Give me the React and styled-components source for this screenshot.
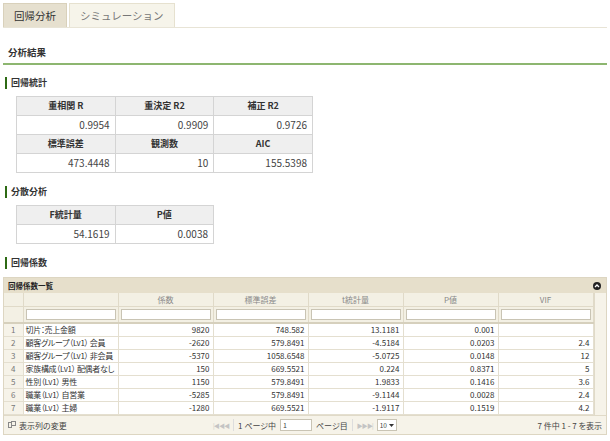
import React from "react";
import styled, { createGlobalStyle } from "styled-components";

const GlobalStyle = createGlobalStyle`
  html, body {
    margin: 0;
    padding: 0;
    background: #fff;
    font-family: "Noto Sans CJK JP", "DejaVu Sans", sans-serif;
    color: #333;
  }
`;

const Page = styled.div`
  padding: 3px 3px 0 3px;
`;

const TabBar = styled.div`
  display: flex;
  gap: 2px;
  height: 24px;
  border-bottom: 1px solid #e8e4d6;
`;

const Tab = styled.div`
  height: 24px;
  box-sizing: border-box;
  padding: 0 10px;
  display: flex;
  align-items: center;
  font-size: 10.5px;
  color: ${(p) => (p.$active ? "#333" : "#777")};
  background: ${(p) => (p.$active ? "#e6e0cf" : "#f6f4ea")};
  border: 1px solid ${(p) => (p.$active ? "#d9d1bb" : "#e6e1cf")};
  border-bottom: none;
`;

const MainTitle = styled.div`
  margin-top: 18px;
  padding: 0 0 4px 5px;
  font-size: 9.5px;
  font-weight: bold;
  line-height: 13px;
  border-bottom: 2px solid #8db670;
`;

const SubTitle = styled.div`
  margin: ${(p) => p.$top}px 0 0 2px;
  padding-left: 4px;
  border-left: 2px solid #2d6a14;
  font-size: 9px;
  font-weight: bold;
  line-height: 12px;
`;

const StatTable = styled.table`
  margin: 7px 0 0 13px;
  border-collapse: collapse;
  width: ${(p) => p.$width}px;
  table-layout: fixed;
  th,
  td {
    border: 1px solid #d4d4d4;
    height: 18px;
    padding: 0 5px;
    line-height: 14px;
  }
  th {
    background: #efefef;
    font-weight: bold;
    font-size: 9px;
    text-align: center;
  }
  td {
    background: #fff;
    text-align: right;
    font-size: 10px;
    color: #444;
  }
`;

const Grid = styled.div`
  margin-top: 8px;
  border: 1px solid #ddd6c2;
  background: #f6f3e9;
  font-size: 8px;
  font-feature-settings: "palt";
`;

const Caption = styled.div`
  display: flex;
  align-items: center;
  justify-content: space-between;
  height: 15px;
  padding: 0 4px;
  background: #e6dfcb;
  font-weight: bold;
  font-size: 7.5px;
  color: #222;
`;

const CloseBtn = styled.span`
  width: 8px;
  height: 8px;
  border-radius: 50%;
  background: #222;
  display: flex;
  align-items: center;
  justify-content: center;
  margin-right: 1px;
`;

const Table = styled.table`
  border-collapse: collapse;
  table-layout: fixed;
  width: 589px;
  background: #f6f3e9;
`;

const HeadCell = styled.th`
  font-weight: normal;
  color: #888;
  height: 13px;
  padding: 0 2px;
  border-right: 1px solid #e0dac8;
  border-bottom: 1px solid #e0dac8;
  background: #f3f0e4;
  text-align: center;
`;

const FilterCell = styled.td`
  height: 13px;
  padding: 1px 2px 1px 2px;
  border-right: 1px solid #e0dac8;
  border-bottom: 2px solid #d6d0bd;
  background: #f3f0e4;
`;

const FilterInput = styled.div`
  height: 9px;
  background: #fff;
  border: 1px solid #c9c4b4;
`;

const Cell = styled.td`
  height: 12px;
  padding: 0 3px 0 ${(p) => (p.$align === "left" ? 2 : 3)}px;
  line-height: 12px;
  border-right: 1px solid #e4dfd0;
  border-bottom: 1px solid #e4dfd0;
  background: ${(p) => (p.$num ? "#f6f3e9" : "#fff")};
  text-align: ${(p) => p.$align || "left"};
  color: ${(p) => (p.$num ? "#777" : "#333")};
  letter-spacing: ${(p) => (p.$align === "left" ? "-0.3px" : "0")};
  white-space: nowrap;
  overflow: hidden;
`;

const Body = styled.div`
  display: flex;
`;

const Spare = styled.div`
  flex: 1;
  background: #f6f3e9;
  border-left: 1px solid #e0dac8;
`;

const Pager = styled.div`
  display: grid;
  grid-template-columns: 1fr auto 1fr;
  align-items: center;
  height: 16px;
  padding: 1px 4px;
  border-top: 1px solid #e0dac8;
  background: #f6f3e9;
  color: #444;
`;

const PagerLeft = styled.div`
  display: flex;
  align-items: center;
  gap: 3px;
`;

const PagerMid = styled.div`
  display: flex;
  align-items: center;
  gap: 4px;
  color: #444;
`;

const PagerRight = styled.div`
  text-align: right;
`;

const NavIcon = styled.span`
  color: #c4c4c4;
  font-size: 6px;
  letter-spacing: -1px;
`;

const Sep = styled.span`
  width: 1px;
  height: 12px;
  background: #ddd;
`;

const PageInput = styled.div`
  width: 28px;
  height: 10px;
  background: #fff;
  border: 1px solid #c9c4b4;
  font-size: 7px;
  line-height: 10px;
  padding-left: 2px;
`;

const SizeSelect = styled.div`
  display: flex;
  align-items: center;
  gap: 2px;
  height: 10px;
  padding: 0 2px;
  background: #fff;
  border: 1px solid #c9c4b4;
  font-size: 6.5px;
`;

const cols = [
  { w: 19, label: "" },
  { w: 95, label: "" },
  { w: 95, label: "係数" },
  { w: 95, label: "標準誤差" },
  { w: 95, label: "t統計量" },
  { w: 95, label: "P値" },
  { w: 95, label: "VIF" },
];

const rows = [
  ["切片：売上金額", "9820", "748.582", "13.1181", "0.001", ""],
  ["顧客グループ（Lv1） 会員", "-2620", "579.8491", "-4.5184", "0.0203", "2.4"],
  ["顧客グループ（Lv1） 非会員", "-5370", "1058.6548", "-5.0725", "0.0148", "12"],
  ["家族構成（Lv1） 配偶者なし", "150", "669.5521", "0.224", "0.8371", "5"],
  ["性別（Lv1） 男性", "1150", "579.8491", "1.9833", "0.1416", "3.6"],
  ["職業（Lv1） 自営業", "-5285", "579.8491", "-9.1144", "0.0028", "2.4"],
  ["職業（Lv1） 主婦", "-1280", "669.5521", "-1.9117", "0.1519", "4.2"],
];

export default function App() {
  return (
    <Page>
      <GlobalStyle />
      <TabBar>
        <Tab $active>回帰分析</Tab>
        <Tab>シミュレーション</Tab>
      </TabBar>

      <MainTitle>分析結果</MainTitle>

      <SubTitle $top={12}>回帰統計</SubTitle>
      <StatTable $width={297}>
        <tbody>
          <tr>
            <th>重相関 R</th>
            <th>重決定 R2</th>
            <th>補正 R2</th>
          </tr>
          <tr>
            <td>0.9954</td>
            <td>0.9909</td>
            <td>0.9726</td>
          </tr>
          <tr>
            <th>標準誤差</th>
            <th>観測数</th>
            <th>AIC</th>
          </tr>
          <tr>
            <td>473.4448</td>
            <td>10</td>
            <td>155.5398</td>
          </tr>
        </tbody>
      </StatTable>

      <SubTitle $top={13}>分散分析</SubTitle>
      <StatTable $width={198}>
        <tbody>
          <tr>
            <th>F統計量</th>
            <th>P値</th>
          </tr>
          <tr>
            <td>54.1619</td>
            <td>0.0038</td>
          </tr>
        </tbody>
      </StatTable>

      <SubTitle $top={13}>回帰係数</SubTitle>
      <Grid>
        <Caption>
          <span>回帰係数一覧</span>
          <CloseBtn>
            <svg width="6" height="6" viewBox="0 0 6 6">
              <path d="M1 4 L3 2 L5 4" stroke="#fff" strokeWidth="1.3" fill="none" />
            </svg>
          </CloseBtn>
        </Caption>
        <Body>
          <Table>
            <colgroup>
              {cols.map((c, i) => (
                <col key={i} style={{ width: c.w }} />
              ))}
            </colgroup>
            <thead>
              <tr>
                {cols.map((c, i) => (
                  <HeadCell key={i}>{c.label}</HeadCell>
                ))}
              </tr>
              <tr>
                {cols.map((c, i) => (
                  <FilterCell key={i}>{i > 0 && <FilterInput />}</FilterCell>
                ))}
              </tr>
            </thead>
            <tbody>
              {rows.map((r, i) => (
                <tr key={i}>
                  <Cell $num $align="center">
                    {i + 1}
                  </Cell>
                  {r.map((v, j) => (
                    <Cell key={j} $align={j === 0 ? "left" : "right"}>
                      {v}
                    </Cell>
                  ))}
                </tr>
              ))}
            </tbody>
          </Table>
          <Spare />
        </Body>
        <Pager>
          <PagerLeft>
            <svg width="8" height="8" viewBox="0 0 8 8">
              <rect x="0.5" y="1.5" width="3" height="5" fill="none" stroke="#888" />
              <rect x="3.5" y="0.5" width="4" height="4" fill="none" stroke="#888" />
            </svg>
            <span>表示列の変更</span>
          </PagerLeft>
          <PagerMid>
            <NavIcon>|◀ ◀◀</NavIcon>
            <Sep />
            <span>1 ページ中</span>
            <PageInput>1</PageInput>
            <span>ページ目</span>
            <Sep />
            <NavIcon>▶▶ ▶|</NavIcon>
            <SizeSelect>
              10
              <svg width="5" height="3" viewBox="0 0 5 3">
                <path d="M0 0 L5 0 L2.5 3 Z" fill="#333" />
              </svg>
            </SizeSelect>
          </PagerMid>
          <PagerRight>7 件中 1 - 7 を表示</PagerRight>
        </Pager>
      </Grid>
    </Page>
  );
}
